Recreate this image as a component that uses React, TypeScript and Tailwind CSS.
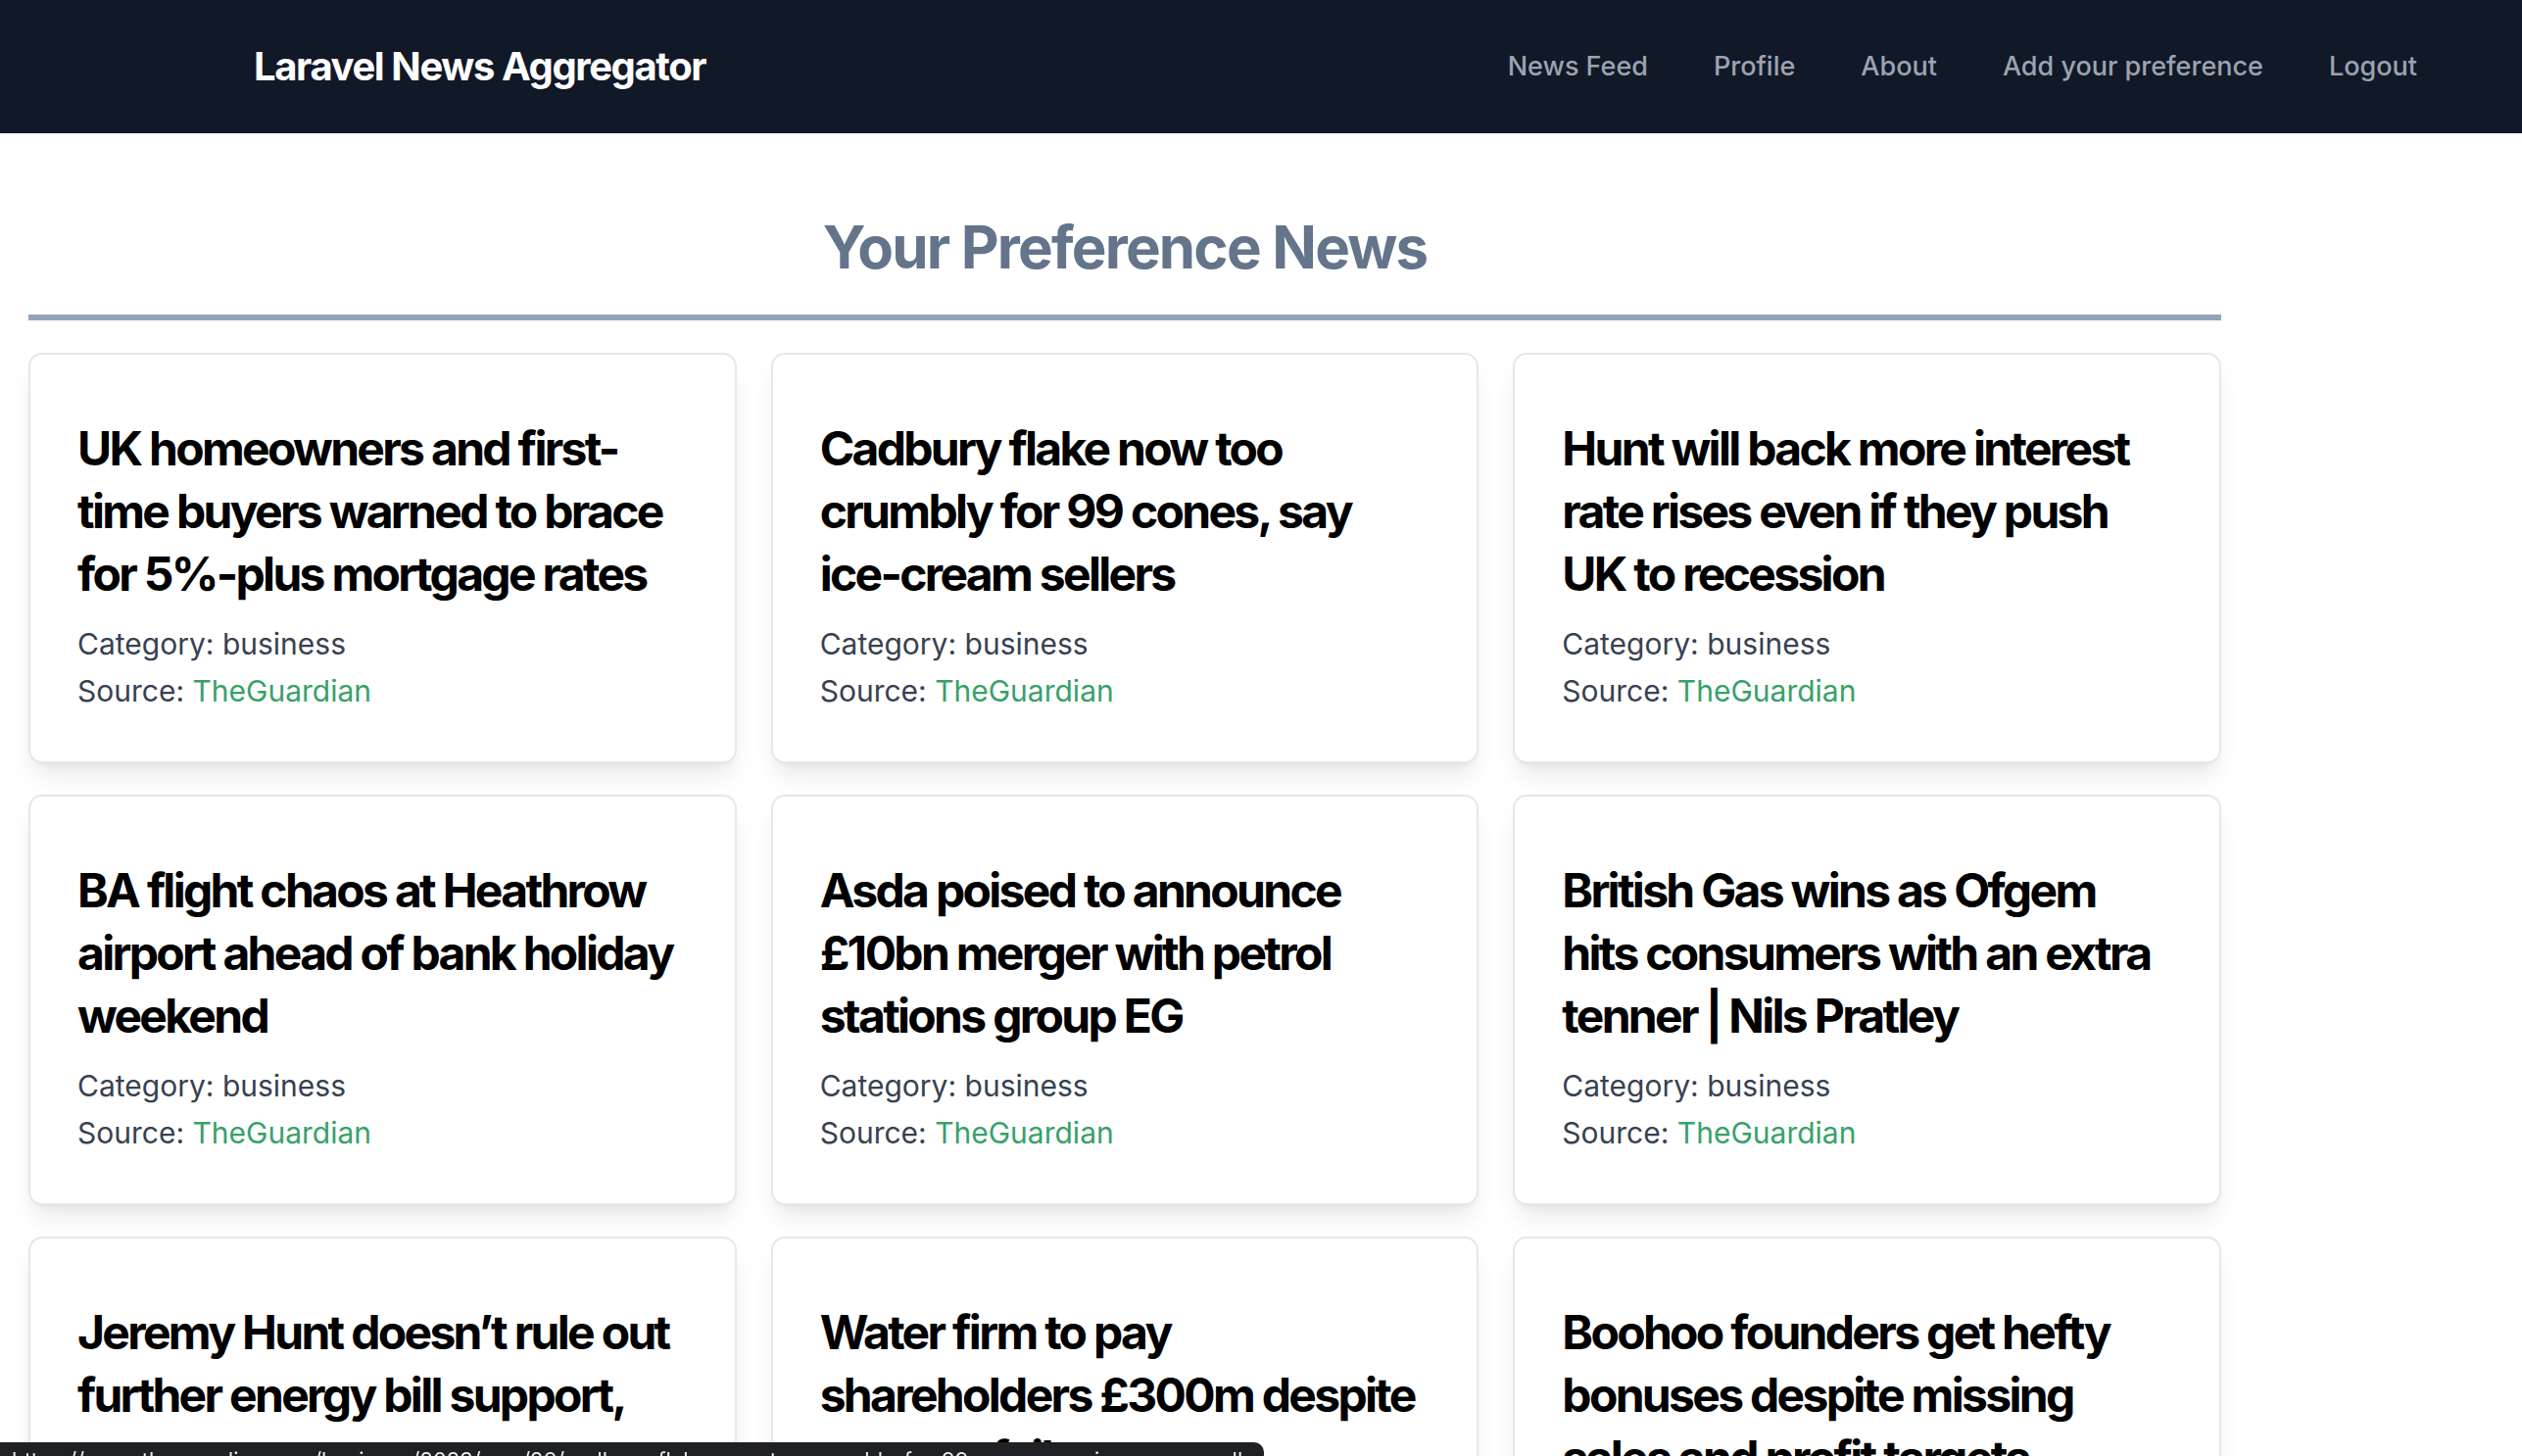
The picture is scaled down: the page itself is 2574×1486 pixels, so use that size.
import React from "react";

type Item = { title: string; category: string; source: string };

const items: Item[] = [
  { title: "UK homeowners and first-time buyers warned to brace for 5%-plus mortgage rates", category: "business", source: "TheGuardian" },
  { title: "Cadbury flake now too crumbly for 99 cones, say ice-cream sellers", category: "business", source: "TheGuardian" },
  { title: "Hunt will back more interest rate rises even if they push UK to recession", category: "business", source: "TheGuardian" },
  { title: "BA flight chaos at Heathrow airport ahead of bank holiday weekend", category: "business", source: "TheGuardian" },
  { title: "Asda poised to announce £10bn merger with petrol stations group EG", category: "business", source: "TheGuardian" },
  { title: "British Gas wins as Ofgem hits consumers with an extra tenner | Nils Pratley", category: "business", source: "TheGuardian" },
  { title: "Jeremy Hunt doesn’t rule out further energy bill support, says report", category: "business", source: "TheGuardian" },
  { title: "Water firm to pay shareholders £300m despite sewage failures", category: "business", source: "TheGuardian" },
  { title: "Boohoo founders get hefty bonuses despite missing sales and profit targets", category: "business", source: "TheGuardian" },
];

function Card({ item }: { item: Item }) {
  return (
    <div className="bg-white border-2 border-[#e5e7eb] rounded-[14px] p-[48px] shadow-[0_17px_26px_-5px_rgba(0,0,0,0.09),0_6px_10px_-6px_rgba(0,0,0,0.08)]">
      <h2 className="mt-[16px] mb-[15px] text-[48px] leading-[64px] font-bold tracking-[-0.056em] text-black">
        {item.title}
      </h2>
      <p className="text-[30px] leading-[48px] text-[#374151]">Category: {item.category}</p>
      <p className="text-[30px] leading-[48px] text-[#374151]">
        Source: <span className="text-[#38a169]">{item.source}</span>
      </p>
    </div>
  );
}

export default function App() {
  return (
    <div className="min-h-screen bg-white font-['Inter','Liberation_Sans',sans-serif]">
      <nav className="h-[136px] bg-[#111827] flex items-center justify-between pl-[259px] pr-[107px]">
        <div className="text-white text-[40px] font-bold tracking-[-0.035em]">Laravel News Aggregator</div>
        <div className="flex items-center gap-[67px] text-[27px] font-medium text-[#9ca3af]">
          <a>News Feed</a>
          <a>Profile</a>
          <a>About</a>
          <a>Add your preference</a>
          <a>Logout</a>
        </div>
      </nav>
      <main className="pt-[82px]">
        <div className="ml-[29px] w-[2238px]">
          <h1 className="text-center text-[60px] leading-[68px] font-bold tracking-[-0.03em] text-[#64748b] pb-[35px] border-b-[6px] border-[#94a3b8]">
            Your Preference News
          </h1>
          <div className="mt-[33px] grid grid-cols-3 gap-x-[35px] gap-y-[32px]">
            {items.map((it, i) => (
              <Card key={i} item={it} />
            ))}
          </div>
        </div>
      </main>
      <div className="fixed left-0 bottom-0 w-[1290px] h-[14px] overflow-hidden bg-[#202124] rounded-tr-[10px]">
        <div className="pt-[7px] pl-[12px] text-[22px] leading-none whitespace-nowrap text-[#e8eaed]">
          https://www.theguardian.com/business/2023/may/26/cadbury-flake-now-too-crumbly-for-99-cones-say-ice-cream-sellers
        </div>
      </div>
    </div>
  );
}
